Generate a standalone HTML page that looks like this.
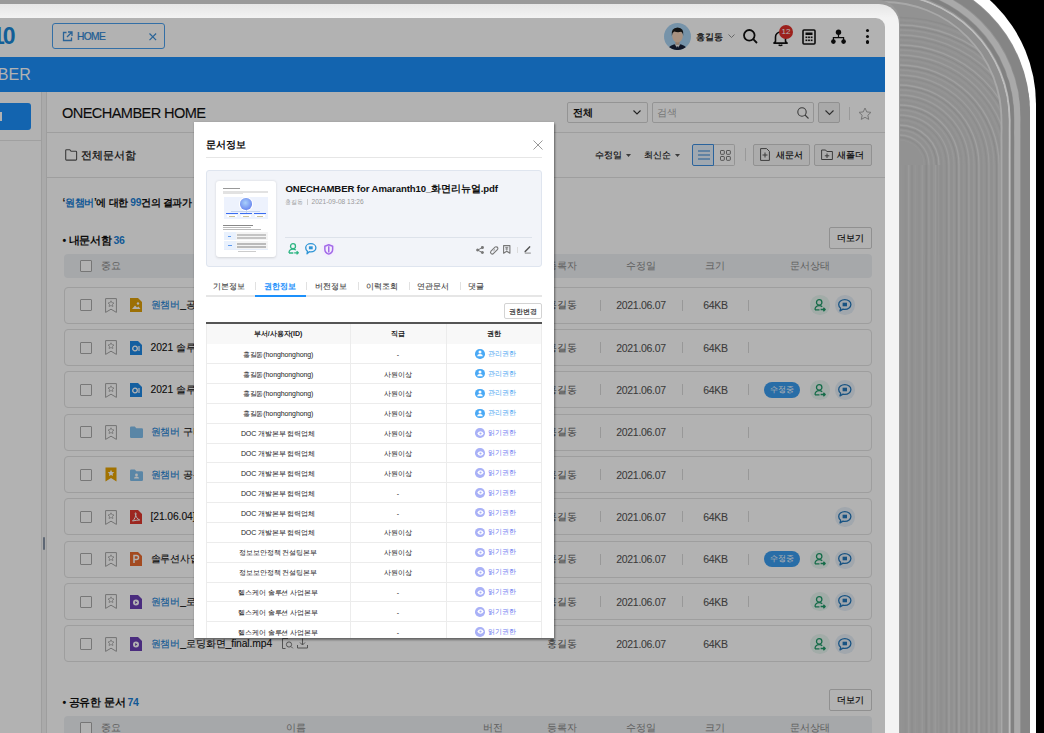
<!DOCTYPE html><html><head><meta charset="utf-8"><style>
*{box-sizing:border-box;margin:0;padding:0}
html,body{width:1044px;height:733px;overflow:hidden;background:#000;font-family:"Liberation Sans",sans-serif;color:#111}
.a{position:absolute}
.t{position:absolute;white-space:nowrap;line-height:1}
svg{position:absolute;overflow:visible}
</style></head><body>
<svg style="left:0;top:0" width="1044" height="733" viewBox="0 0 1044 733"><rect x="0" y="0" width="1044" height="733" fill="#000"/><path d="M860 -36 H896 A140 140 0 0 1 1036 104 V760 H860 Z" fill="#fff"/><path d="M860 -27.6 H890 A140 140 0 0 1 1030 112.4 V760 H860 Z" fill="#929292"/><clipPath id="gc"><path d="M860 -27.6 H890 A140 140 0 0 1 1030 112.4 V760 H860 Z"/></clipPath><g clip-path="url(#gc)"><path d="M880 140.0 H899 A25.0 25.0 0 0 1 924.0 165 V760" fill="none" stroke="#959595" stroke-width="1.3"/><path d="M880 137.5 H899 A27.5 27.5 0 0 1 926.5 165 V760" fill="none" stroke="#8c8c8c" stroke-width="1.3"/><path d="M880 135.0 H899 A30.0 30.0 0 0 1 929.0 165 V760" fill="none" stroke="#9d9d9d" stroke-width="1.3"/><path d="M880 132.5 H899 A32.5 32.5 0 0 1 931.5 165 V760" fill="none" stroke="#909090" stroke-width="1.3"/><path d="M880 130.0 H899 A35.0 35.0 0 0 1 934.0 165 V760" fill="none" stroke="#989898" stroke-width="1.3"/><path d="M880 127.5 H899 A37.5 37.5 0 0 1 936.5 165 V760" fill="none" stroke="#8a8a8a" stroke-width="1.3"/><path d="M880 125.0 H899 A40.0 40.0 0 0 1 939.0 165 V760" fill="none" stroke="#a0a0a0" stroke-width="1.3"/><path d="M880 122.5 H899 A42.5 42.5 0 0 1 941.5 165 V760" fill="none" stroke="#8f8f8f" stroke-width="1.3"/><path d="M880 120.0 H899 A45.0 45.0 0 0 1 944.0 165 V760" fill="none" stroke="#959595" stroke-width="1.3"/><path d="M880 117.5 H899 A47.5 47.5 0 0 1 946.5 165 V760" fill="none" stroke="#8c8c8c" stroke-width="1.3"/><path d="M880 115.0 H899 A50.0 50.0 0 0 1 949.0 165 V760" fill="none" stroke="#9d9d9d" stroke-width="1.3"/><path d="M880 112.5 H899 A52.5 52.5 0 0 1 951.5 165 V760" fill="none" stroke="#909090" stroke-width="1.3"/><path d="M880 110.0 H899 A55.0 55.0 0 0 1 954.0 165 V760" fill="none" stroke="#989898" stroke-width="1.3"/><path d="M880 107.5 H899 A57.5 57.5 0 0 1 956.5 165 V760" fill="none" stroke="#8a8a8a" stroke-width="1.3"/><path d="M880 105.0 H899 A60.0 60.0 0 0 1 959.0 165 V760" fill="none" stroke="#a0a0a0" stroke-width="1.3"/><path d="M880 102.5 H899 A62.5 62.5 0 0 1 961.5 165 V760" fill="none" stroke="#8f8f8f" stroke-width="1.3"/><path d="M880 100.0 H899 A65.0 65.0 0 0 1 964.0 165 V760" fill="none" stroke="#959595" stroke-width="1.3"/><path d="M880 97.5 H899 A67.5 67.5 0 0 1 966.5 165 V760" fill="none" stroke="#8c8c8c" stroke-width="1.3"/><path d="M880 95.0 H899 A70.0 70.0 0 0 1 969.0 165 V760" fill="none" stroke="#9d9d9d" stroke-width="1.3"/><path d="M880 92.5 H899 A72.5 72.5 0 0 1 971.5 165 V760" fill="none" stroke="#909090" stroke-width="1.3"/><path d="M880 90.0 H899 A75.0 75.0 0 0 1 974.0 165 V760" fill="none" stroke="#989898" stroke-width="1.3"/><path d="M880 87.5 H899 A77.5 77.5 0 0 1 976.5 165 V760" fill="none" stroke="#8a8a8a" stroke-width="1.3"/><path d="M880 85.0 H899 A80.0 80.0 0 0 1 979.0 165 V760" fill="none" stroke="#a0a0a0" stroke-width="1.3"/><path d="M880 82.5 H899 A82.5 82.5 0 0 1 981.5 165 V760" fill="none" stroke="#8f8f8f" stroke-width="1.3"/><path d="M880 80.0 H899 A85.0 85.0 0 0 1 984.0 165 V760" fill="none" stroke="#959595" stroke-width="1.3"/><path d="M880 77.5 H899 A87.5 87.5 0 0 1 986.5 165 V760" fill="none" stroke="#8c8c8c" stroke-width="1.3"/><path d="M880 75.0 H899 A90.0 90.0 0 0 1 989.0 165 V760" fill="none" stroke="#9d9d9d" stroke-width="1.3"/><path d="M880 72.5 H899 A92.5 92.5 0 0 1 991.5 165 V760" fill="none" stroke="#909090" stroke-width="1.3"/><path d="M880 70.0 H899 A95.0 95.0 0 0 1 994.0 165 V760" fill="none" stroke="#989898" stroke-width="1.3"/><path d="M880 67.5 H899 A97.5 97.5 0 0 1 996.5 165 V760" fill="none" stroke="#8a8a8a" stroke-width="1.3"/><path d="M880 65.0 H899 A100.0 100.0 0 0 1 999.0 165 V760" fill="none" stroke="#a0a0a0" stroke-width="1.3"/><path d="M880 62.5 H899 A102.5 102.5 0 0 1 1001.5 165 V760" fill="none" stroke="#8f8f8f" stroke-width="1.3"/><path d="M880 60.0 H899 A105.0 105.0 0 0 1 1004.0 165 V760" fill="none" stroke="#959595" stroke-width="1.3"/><path d="M880 57.5 H899 A107.5 107.5 0 0 1 1006.5 165 V760" fill="none" stroke="#8c8c8c" stroke-width="1.3"/><path d="M880 55.0 H899 A110.0 110.0 0 0 1 1009.0 165 V760" fill="none" stroke="#9d9d9d" stroke-width="1.3"/><path d="M880 52.5 H899 A112.5 112.5 0 0 1 1011.5 165 V760" fill="none" stroke="#909090" stroke-width="1.3"/><path d="M880 50.0 H899 A115.0 115.0 0 0 1 1014.0 165 V760" fill="none" stroke="#989898" stroke-width="1.3"/><path d="M880 47.5 H899 A117.5 117.5 0 0 1 1016.5 165 V760" fill="none" stroke="#8a8a8a" stroke-width="1.3"/><path d="M880 45.0 H899 A120.0 120.0 0 0 1 1019.0 165 V760" fill="none" stroke="#a0a0a0" stroke-width="1.3"/><path d="M880 42.5 H899 A122.5 122.5 0 0 1 1021.5 165 V760" fill="none" stroke="#8f8f8f" stroke-width="1.3"/><path d="M880 40.0 H899 A125.0 125.0 0 0 1 1024.0 165 V760" fill="none" stroke="#959595" stroke-width="1.3"/><path d="M880 37.5 H899 A127.5 127.5 0 0 1 1026.5 165 V760" fill="none" stroke="#8c8c8c" stroke-width="1.3"/><path d="M880 35.0 H899 A130.0 130.0 0 0 1 1029.0 165 V760" fill="none" stroke="#9d9d9d" stroke-width="1.3"/><path d="M880 32.5 H899 A132.5 132.5 0 0 1 1031.5 165 V760" fill="none" stroke="#909090" stroke-width="1.3"/><path d="M880 30.0 H899 A135.0 135.0 0 0 1 1034.0 165 V760" fill="none" stroke="#989898" stroke-width="1.3"/><path d="M880 27.5 H899 A137.5 137.5 0 0 1 1036.5 165 V760" fill="none" stroke="#8a8a8a" stroke-width="1.3"/><path d="M880 25.0 H899 A140.0 140.0 0 0 1 1039.0 165 V760" fill="none" stroke="#a0a0a0" stroke-width="1.3"/><path d="M880 22.5 H899 A142.5 142.5 0 0 1 1041.5 165 V760" fill="none" stroke="#8f8f8f" stroke-width="1.3"/><path d="M880 20.0 H899 A145.0 145.0 0 0 1 1044.0 165 V760" fill="none" stroke="#959595" stroke-width="1.3"/><path d="M880 17.5 H899 A147.5 147.5 0 0 1 1046.5 165 V760" fill="none" stroke="#8c8c8c" stroke-width="1.3"/><rect x="901.0" y="165" width="1.7" height="610" fill="#959595" opacity=".6"/><rect x="904.4" y="165" width="1.7" height="610" fill="#909090" opacity=".6"/><rect x="907.8" y="165" width="1.7" height="610" fill="#a0a0a0" opacity=".6"/><rect x="911.2" y="165" width="1.7" height="610" fill="#8c8c8c" opacity=".6"/><rect x="914.6" y="165" width="1.7" height="610" fill="#989898" opacity=".6"/><rect x="918.0" y="165" width="1.7" height="610" fill="#8f8f8f" opacity=".6"/><rect x="921.4" y="165" width="1.7" height="610" fill="#9d9d9d" opacity=".6"/><rect x="924.8" y="165" width="1.7" height="610" fill="#8a8a8a" opacity=".6"/><rect x="928.2" y="165" width="1.7" height="610" fill="#959595" opacity=".6"/><rect x="931.6" y="165" width="1.7" height="610" fill="#909090" opacity=".6"/><rect x="935.0" y="165" width="1.7" height="610" fill="#a0a0a0" opacity=".6"/><rect x="938.4" y="165" width="1.7" height="610" fill="#8c8c8c" opacity=".6"/><path d="M860 -22 H889.2 A136 136 0 0 1 1025.2 114 V760 H860 Z" fill="none" stroke="#858585" stroke-width="9.7"/><path d="M860 -15 H885.3 A132 132 0 0 1 1017.3 117 V760 H860 Z" fill="none" stroke="#a9a9a9" stroke-width="6"/><path d="M860 -10 H884.2 A128 128 0 0 1 1012.2 118 V760 H860 Z" fill="none" stroke="#818181" stroke-width="3.6"/><path d="M860 -6 H883.5 A126 126 0 0 1 1009.5 120 V760 H860 Z" fill="none" stroke="#bdbdbd" stroke-width="2"/><path d="M860 -2 H883.5 A122 122 0 0 1 1005.5 120 V760 H860 Z" fill="none" stroke="#8f8f8f" stroke-width="6"/><path d="M860 2 H883.5 A118 118 0 0 1 1001.5 120 V760 H860 Z" fill="none" stroke="#a8a8a8" stroke-width="1.8"/></g></svg>
<div class="a" style="left:-40px;top:0;width:940px;height:800px;background:#9a9a9a;border-top-right-radius:22px"></div>
<div class="a" style="left:-40px;top:3.8px;width:939px;height:800px;background:linear-gradient(#e6e6e6,#f3f3f3 14px);border-top-right-radius:20px"></div>
<div id="app" class="a" style="left:-20px;top:18px;width:904.8px;height:760px;background:#fff;border-top-right-radius:9px;overflow:hidden">
<div class="a" style="left:0;top:0;width:1000px;height:760px">
<div class="a" style="left:0.00px;top:0.00px;width:904.80px;height:38.50px;background:#fff"></div>
<div class="t" style="left:12.00px;top:18.30px;transform:translateY(-50%);font-size:23px;font-weight:bold;color:#1a88d8;letter-spacing:-2px">10</div>
<div class="a" style="left:71.80px;top:5.40px;width:113.00px;height:25.40px;border:1.8px solid #4aa0ee;border-radius:3px;background:#fff"></div>
<svg style="left:82.00px;top:13.00px" width="11" height="11" viewBox="0 0 11 11"><path d="M4.5 1.5H1.5v8h8V6.5M6 1h4v4M10 1L5 6" fill="none" stroke="#3d8fd8" stroke-width="1.3"/></svg>
<div class="t" style="left:97.00px;top:18.80px;transform:translateY(-50%);font-size:10.2px;color:#2f86d4;letter-spacing:-0.6px;-webkit-text-stroke-width:0.23px">HOME</div>
<svg style="left:168.80px;top:15.20px" width="7.6" height="7.6" viewBox="0 0 7.6 7.6"><path d="M.5 .5l6.6 6.6M7.1 .5L.5 7.1" stroke="#3d8fd8" stroke-width="1.2"/></svg>
<svg style="left:684.00px;top:4.50px" width="27" height="27" viewBox="0 0 27 27"><defs><clipPath id="av"><circle cx="13.5" cy="13.5" r="13.5"/></clipPath></defs><g clip-path="url(#av)"><rect width="27" height="27" fill="#a9d3f2"/><path d="M3 28Q4.5 21.5 13.5 21Q22.5 21.5 24 28Z" fill="#172038"/><path d="M10.8 21.2L13.5 26L16.2 21.2Z" fill="#f2f2f2"/><path d="M12.6 23.5h1.8l.4 3.5h-2.6z" fill="#1a2540"/><rect x="11.5" y="17" width="4" height="4.5" fill="#d9b49a"/><ellipse cx="13.5" cy="13" rx="5.3" ry="6.4" fill="#efd0b8"/><path d="M7.8 13Q6.6 5 13.6 4.6Q20.4 5 19.2 13Q18.8 9.2 17 8.8Q14 9.8 10.2 8.6Q8.2 9.6 7.8 13Z" fill="#1a1a1a"/></g></svg>
<div class="t" style="left:715.50px;top:18.50px;transform:translateY(-50%);font-size:9.4px;color:#111;-webkit-text-stroke-width:0.25px">홍길동</div>
<svg style="left:748.00px;top:16.00px" width="7" height="4" viewBox="0 0 7 4"><path d="M0.5 0.5L3.5 3.5L6.5 0.5" fill="none" stroke="#888" stroke-width="0.9"/></svg>
<svg style="left:763.00px;top:11.00px" width="15" height="15" viewBox="0 0 15 15"><circle cx="6.3" cy="6.3" r="5.3" fill="none" stroke="#111" stroke-width="1.8"/><path d="M10.2 10.2L14 14" stroke="#111" stroke-width="1.8"/></svg>
<svg style="left:792.50px;top:11.50px" width="15" height="16" viewBox="0 0 15 16"><path d="M2.5 11.5V7a5 5 0 0 1 10 0v4.5l1.6 1.6H0.9z" fill="none" stroke="#111" stroke-width="1.6" stroke-linejoin="round"/><path d="M7.5 0.5v1.5M5.8 14.6a1.8 1.5 0 0 0 3.4 0" fill="none" stroke="#111" stroke-width="1.5"/></svg>
<div class="a" style="left:799.00px;top:6.50px;width:14.00px;height:14.00px;border-radius:50%;background:#e0302a"></div>
<div class="t" style="left:806.00px;top:13.50px;transform:translate(-50%,-50%);font-size:8px;color:#fff">12</div>
<svg style="left:822.00px;top:11.00px" width="14" height="16" viewBox="0 0 14 16"><rect x="1" y="1" width="12" height="14" rx="1" fill="none" stroke="#111" stroke-width="1.6"/><rect x="3.5" y="3.5" width="7" height="2.5" fill="#111"/><g fill="#111"><rect x="3.5" y="7.5" width="1.8" height="1.6"/><rect x="6.1" y="7.5" width="1.8" height="1.6"/><rect x="8.7" y="7.5" width="1.8" height="1.6"/><rect x="3.5" y="10.5" width="1.8" height="1.6"/><rect x="6.1" y="10.5" width="1.8" height="1.6"/><rect x="8.7" y="10.5" width="1.8" height="1.6"/></g></svg>
<svg style="left:851.00px;top:11.00px" width="15" height="16" viewBox="0 0 15 16"><circle cx="7.5" cy="3.2" r="2.7" fill="#111"/><circle cx="2.4" cy="12.6" r="2.3" fill="#111"/><circle cx="12.6" cy="12.6" r="2.3" fill="#111"/><path d="M7.5 4v4.6M2.4 12V8.6h10.2V12" fill="none" stroke="#111" stroke-width="1.2"/></svg>
<div class="a" style="left:886.20px;top:11.00px;width:3.20px;height:3.20px;border-radius:50%;background:#111"></div>
<div class="a" style="left:886.20px;top:16.70px;width:3.20px;height:3.20px;border-radius:50%;background:#111"></div>
<div class="a" style="left:886.20px;top:22.40px;width:3.20px;height:3.20px;border-radius:50%;background:#111"></div>
<div class="a" style="left:0.00px;top:38.50px;width:904.80px;height:35.50px;background:#1c90fb"></div>
<div class="t" style="left:-64.00px;top:56.50px;transform:translateY(-50%);font-size:16px;color:#fff;letter-spacing:0px">ONECHAMBER</div>
<div class="a" style="left:0.00px;top:74.00px;width:61.00px;height:700.00px;background:#fff"></div>
<div class="a" style="left:0.00px;top:84.60px;width:51.40px;height:27.60px;background:#1c90fb;border-radius:3px"></div>
<div class="a" style="left:0.00px;top:122.00px;width:61.00px;height:1.00px;background:#e6e6e6"></div>
<div class="a" style="left:18.00px;top:93.50px;width:3.50px;height:9.50px;background:#fff"></div>
<div class="a" style="left:61.00px;top:74.00px;width:5.70px;height:700.00px;background:#f4f4f4;border-left:1px solid #e2e2e2"></div>
<div class="a" style="left:66.20px;top:74.00px;width:1.00px;height:700.00px;background:#e2e2e2"></div>
<div class="a" style="left:62.80px;top:519.00px;width:2.30px;height:12.70px;background:#8794a6;border-radius:1px"></div>
<div class="a" style="left:66.50px;top:74.00px;width:840.00px;height:700.00px;background:#fff"></div>
<div class="t" style="left:82.00px;top:94.60px;transform:translateY(-50%);font-size:14.6px;color:#111;letter-spacing:-0.6px;-webkit-text-stroke-width:0.10px">ONECHAMBER HOME</div>
<div class="a" style="left:66.50px;top:114.00px;width:840.00px;height:1.00px;background:#e3e3e3"></div>
<div class="a" style="left:587.00px;top:83.70px;width:81.30px;height:21.50px;border:1px solid #d5d5d5;border-radius:2px;background:#fff"></div>
<div class="t" style="left:592.50px;top:94.50px;transform:translateY(-50%);font-size:10px;font-weight:bold;color:#111">전체</div>
<svg style="left:653.00px;top:92.00px" width="8" height="5" viewBox="0 0 8 5"><path d="M0.5 0.5L4 4L7.5 0.5" fill="none" stroke="#333" stroke-width="1.1"/></svg>
<div class="a" style="left:672.00px;top:83.70px;width:162.40px;height:21.50px;border:1px solid #d5d5d5;border-radius:2px;background:#fff"></div>
<div class="t" style="left:677.00px;top:94.50px;transform:translateY(-50%);font-size:10px;color:#aaa">검색</div>
<svg style="left:817.00px;top:88.50px" width="12" height="12" viewBox="0 0 12 12"><circle cx="5" cy="5" r="4.2" fill="none" stroke="#555" stroke-width="1.1"/><path d="M8 8l3.5 3.5" stroke="#555" stroke-width="1.1"/></svg>
<div class="a" style="left:838.00px;top:83.70px;width:21.60px;height:21.50px;border:1px solid #cfcfcf;border-radius:2px;background:#f3f3f3"></div>
<svg style="left:844.50px;top:92.00px" width="9" height="5" viewBox="0 0 9 5"><path d="M0.5 0.5L4.5 4.5L8.5 0.5" fill="none" stroke="#444" stroke-width="1.1"/></svg>
<div class="a" style="left:868.50px;top:89.00px;width:1.00px;height:13.00px;background:#dcdcdc"></div>
<svg style="left:877.50px;top:88.50px" width="14" height="14" viewBox="0 0 14 14"><path d="M7 1l1.76 3.9 4.24.46-3.17 2.86.87 4.18L7 10.3 3.3 12.4l.87-4.18L1 5.36l4.24-.46z" fill="none" stroke="#aaa" stroke-width="1"/></svg>
<svg style="left:84.50px;top:131.30px" width="12.5" height="12" viewBox="0 0 12.5 12"><path d="M1.5 0.7h3.3l1.3 1.6h4.7a.8.8 0 0 1 .8.8v7.2a.8.8 0 0 1-.8.8H1.5a.8.8 0 0 1-.8-.8V1.5a.8.8 0 0 1 .8-.8z" fill="none" stroke="#555" stroke-width="1.1"/></svg>
<div class="t" style="left:101.40px;top:137.50px;transform:translateY(-50%);font-size:11.3px;color:#111;-webkit-text-stroke-width:0.20px">전체문서함</div>
<div class="t" style="left:615.00px;top:137.00px;transform:translateY(-50%);font-size:8.7px;color:#111;-webkit-text-stroke-width:0.15px">수정일</div>
<svg style="left:645.70px;top:135.50px" width="5" height="3" viewBox="0 0 5 3"><path d="M0 0h5L2.5 3z" fill="#555"/></svg>
<div class="t" style="left:663.80px;top:137.00px;transform:translateY(-50%);font-size:8.7px;color:#111;-webkit-text-stroke-width:0.15px">최신순</div>
<svg style="left:694.50px;top:135.50px" width="5" height="3" viewBox="0 0 5 3"><path d="M0 0h5L2.5 3z" fill="#555"/></svg>
<div class="a" style="left:712.30px;top:126.00px;width:22.00px;height:21.50px;border:1.4px solid #3d8fe0;border-radius:2px 0 0 2px;background:#e6f1fd"></div>
<svg style="left:717.50px;top:131.50px" width="12" height="10" viewBox="0 0 12 10"><path d="M0 1h12M0 5h12M0 9h12" stroke="#2f86d4" stroke-width="1.2"/></svg>
<div class="a" style="left:734.30px;top:126.00px;width:21.00px;height:21.50px;border:1px solid #d5d5d5;border-left:none;border-radius:0 2px 2px 0;background:#fff"></div>
<svg style="left:739.50px;top:131.50px" width="11" height="11" viewBox="0 0 11 11"><g fill="none" stroke="#777" stroke-width="1"><rect x="0.5" y="0.5" width="3.8" height="3.8" rx="0.6"/><rect x="6.5" y="0.5" width="3.8" height="3.8" rx="0.6"/><rect x="0.5" y="6.5" width="3.8" height="3.8" rx="0.6"/><rect x="6.5" y="6.5" width="3.8" height="3.8" rx="0.6"/></g></svg>
<div class="a" style="left:764.50px;top:130.00px;width:1.00px;height:13.00px;background:#dcdcdc"></div>
<div class="a" style="left:773.00px;top:126.00px;width:57.40px;height:21.50px;border:1px solid #d0d0d0;border-radius:2px;background:#f7f7f7"></div>
<svg style="left:780.00px;top:130.00px" width="10" height="13" viewBox="0 0 10 13"><path d="M0.6 0.6h6l2.8 2.8v9H0.6z" fill="none" stroke="#555" stroke-width="1"/><path d="M5 4.5v5M2.5 7h5" stroke="#555" stroke-width="1"/></svg>
<div class="t" style="left:795.80px;top:137.00px;transform:translateY(-50%);font-size:8.9px;color:#111;-webkit-text-stroke-width:0.20px">새문서</div>
<div class="a" style="left:833.80px;top:126.00px;width:57.90px;height:21.50px;border:1px solid #d0d0d0;border-radius:2px;background:#f7f7f7"></div>
<svg style="left:841.00px;top:130.50px" width="12" height="11" viewBox="0 0 12 11"><path d="M0.6 1h4l1.2 1.5h5.6v8H0.6z" fill="none" stroke="#555" stroke-width="1"/><path d="M6 4.5v4.5M3.8 6.8h4.5" stroke="#555" stroke-width="1"/></svg>
<div class="t" style="left:856.80px;top:137.00px;transform:translateY(-50%);font-size:8.9px;color:#111;-webkit-text-stroke-width:0.20px">새폴더</div>
<div class="a" style="left:66.50px;top:158.50px;width:840.00px;height:1.00px;background:#e3e3e3"></div>
<div class="t" style="left:82.50px;top:184.50px;transform:translateY(-50%);font-size:10.2px;font-weight:bold;color:#111;letter-spacing:-0.35px">‘<span style="color:#1a7fd6">원챔버</span>’에 대한 <span style="color:#1a7fd6">99</span>건의 결과가 검색되었습니다.</div>
<div class="t" style="left:82.50px;top:222.00px;transform:translateY(-50%);font-size:10.5px;font-weight:bold;color:#111;letter-spacing:-0.2px">• 내문서함<span style="color:#1a7fd6;margin-left:1.5px">36</span></div>
<div class="a" style="left:848.50px;top:209.00px;width:43.50px;height:22.00px;border:1px solid #cfcfcf;border-radius:2px;background:#fff"></div>
<div class="t" style="left:870.20px;top:220.00px;transform:translate(-50%,-50%);font-size:8.9px;color:#111;-webkit-text-stroke-width:0.20px">더보기</div>
<div class="a" style="left:83.50px;top:236.20px;width:808.50px;height:23.80px;background:#eef1f4;border-radius:4px"></div>
<div class="a" style="left:100.00px;top:242.20px;width:12.00px;height:12.00px;border:1px solid #aaa;border-radius:1px;background:#fff"></div>
<div class="t" style="left:121.00px;top:248.20px;transform:translateY(-50%);font-size:9.5px;color:#888">중요</div>
<div class="t" style="left:316.00px;top:248.20px;transform:translate(-50%,-50%);font-size:9.5px;color:#888">이름</div>
<div class="t" style="left:513.00px;top:248.20px;transform:translate(-50%,-50%);font-size:9.5px;color:#888">버전</div>
<div class="t" style="left:582.00px;top:248.20px;transform:translate(-50%,-50%);font-size:9.5px;color:#888">등록자</div>
<div class="t" style="left:661.00px;top:248.20px;transform:translate(-50%,-50%);font-size:9.5px;color:#888">수정일</div>
<div class="t" style="left:735.00px;top:248.20px;transform:translate(-50%,-50%);font-size:9.5px;color:#888">크기</div>
<div class="t" style="left:830.00px;top:248.20px;transform:translate(-50%,-50%);font-size:9.5px;color:#888">문서상태</div>
<div class="a" style="left:83.50px;top:268.60px;width:808.50px;height:37.10px;border:1px solid #e2e2e2;border-radius:4px;background:#fff"></div>
<div class="a" style="left:100.00px;top:281.15px;width:12.00px;height:12.00px;border:1px solid #ababab;border-radius:1px;background:#fff"></div>
<svg style="left:125.00px;top:279.85px" width="12" height="15" viewBox="0 0 12 15"><path d="M0.6 0.6h10.8v13.8L6 11.2 0.6 14.4z" fill="none" stroke="#a5a5a5" stroke-width="1"/><path d="M6 2.8l.9 1.9 2.1.3-1.5 1.4.4 2.1L6 7.5l-1.9 1 .4-2.1L3 5l2.1-.3z" fill="none" stroke="#a5a5a5" stroke-width=".8"/></svg>
<svg style="left:150.00px;top:280.15px" width="12" height="14" viewBox="0 0 12 14"><path d="M0 0h8l4 4v10H0z" fill="#e0a10a"/><circle cx="8" cy="5.5" r="1.2" fill="#fff"/><path d="M2 11l3-3.5 2 2 1.5-1L10.5 11z" fill="#fff"/></svg>
<div class="t" style="left:170.60px;top:287.15px;transform:translateY(-50%);font-size:10.3px;color:#111;letter-spacing:-0.1px;-webkit-text-stroke-width:0.10px"><span style="color:#1a7fd6">원챔버</span>_공유 폴더 화면 이미지.png</div>
<div class="t" style="left:582.00px;top:287.15px;transform:translate(-50%,-50%);font-size:9.5px;color:#555">홍길동</div>
<div class="t" style="left:661.00px;top:287.15px;transform:translate(-50%,-50%);font-size:10.5px;color:#555;letter-spacing:-0.3px;-webkit-text-stroke-width:0.07px">2021.06.07</div>
<div class="t" style="left:735.50px;top:287.15px;transform:translate(-50%,-50%);font-size:10.5px;color:#555;letter-spacing:-0.3px;-webkit-text-stroke-width:0.07px">64KB</div>
<div class="a" style="left:619.50px;top:281.65px;width:1.00px;height:11.00px;background:#dadada"></div>
<div class="a" style="left:702.00px;top:281.65px;width:1.00px;height:11.00px;background:#dadada"></div>
<div class="a" style="left:768.00px;top:281.65px;width:1.00px;height:11.00px;background:#dadada"></div>
<div class="a" style="left:830.30px;top:277.45px;width:19.40px;height:19.40px;border-radius:50%;background:#e9f6f1"></div>
<svg style="left:834.00px;top:281.15px" width="12.5" height="12" viewBox="0 0 12.5 12"><circle cx="5.2" cy="3.4" r="2.7" fill="none" stroke="#1e9a68" stroke-width="1.3"/><path d="M1 10.8c0-2.6 1.8-4.2 4.2-4.2 1.3 0 2.3.4 3 1.1M1 10.8h4.5M6.6 10.5h4.5M9.4 8.7l1.8 1.8-1.8 1.8" fill="none" stroke="#1e9a68" stroke-width="1.3" stroke-linejoin="round"/></svg>
<div class="a" style="left:855.30px;top:277.45px;width:19.40px;height:19.40px;border-radius:50%;background:#e7f0f8"></div>
<svg style="left:858.20px;top:280.95px" width="13.6" height="12.6" viewBox="0 0 13.6 12.6"><path d="M6.8.7c3.4 0 6.1 2.1 6.1 4.8s-2.7 4.8-6.1 4.8c-.6 0-1.2-.1-1.8-.2L2 11.9l.7-2.7C1.4 8.3.7 7 .7 5.5.7 2.8 3.4.7 6.8.7z" fill="none" stroke="#2377bb" stroke-width="1.3" stroke-linejoin="round"/><rect x="4.6" y="3.7" width="4.4" height="3.6" fill="#2377bb"/></svg>
<div class="a" style="left:83.50px;top:310.95px;width:808.50px;height:37.10px;border:1px solid #e2e2e2;border-radius:4px;background:#fff"></div>
<div class="a" style="left:100.00px;top:323.50px;width:12.00px;height:12.00px;border:1px solid #ababab;border-radius:1px;background:#fff"></div>
<svg style="left:125.00px;top:322.20px" width="12" height="15" viewBox="0 0 12 15"><path d="M0.6 0.6h10.8v13.8L6 11.2 0.6 14.4z" fill="none" stroke="#a5a5a5" stroke-width="1"/><path d="M6 2.8l.9 1.9 2.1.3-1.5 1.4.4 2.1L6 7.5l-1.9 1 .4-2.1L3 5l2.1-.3z" fill="none" stroke="#a5a5a5" stroke-width=".8"/></svg>
<svg style="left:150.00px;top:322.50px" width="12" height="14" viewBox="0 0 12 14"><path d="M0 0h8l4 4v10H0z" fill="#1e88e5"/><circle cx="5" cy="7.5" r="2.3" fill="none" stroke="#fff" stroke-width="1.3"/><path d="M9 5v5" stroke="#fff" stroke-width="1.2"/></svg>
<div class="t" style="left:170.60px;top:329.50px;transform:translateY(-50%);font-size:10.3px;color:#111;letter-spacing:-0.1px;-webkit-text-stroke-width:0.10px">2021 솔루션사업 기획안.docx</div>
<div class="t" style="left:582.00px;top:329.50px;transform:translate(-50%,-50%);font-size:9.5px;color:#555">홍길동</div>
<div class="t" style="left:661.00px;top:329.50px;transform:translate(-50%,-50%);font-size:10.5px;color:#555;letter-spacing:-0.3px;-webkit-text-stroke-width:0.07px">2021.06.07</div>
<div class="t" style="left:735.50px;top:329.50px;transform:translate(-50%,-50%);font-size:10.5px;color:#555;letter-spacing:-0.3px;-webkit-text-stroke-width:0.07px">64KB</div>
<div class="a" style="left:619.50px;top:324.00px;width:1.00px;height:11.00px;background:#dadada"></div>
<div class="a" style="left:702.00px;top:324.00px;width:1.00px;height:11.00px;background:#dadada"></div>
<div class="a" style="left:768.00px;top:324.00px;width:1.00px;height:11.00px;background:#dadada"></div>
<div class="a" style="left:83.50px;top:353.30px;width:808.50px;height:37.10px;border:1px solid #e2e2e2;border-radius:4px;background:#fff"></div>
<div class="a" style="left:100.00px;top:365.85px;width:12.00px;height:12.00px;border:1px solid #ababab;border-radius:1px;background:#fff"></div>
<svg style="left:125.00px;top:364.55px" width="12" height="15" viewBox="0 0 12 15"><path d="M0.6 0.6h10.8v13.8L6 11.2 0.6 14.4z" fill="none" stroke="#a5a5a5" stroke-width="1"/><path d="M6 2.8l.9 1.9 2.1.3-1.5 1.4.4 2.1L6 7.5l-1.9 1 .4-2.1L3 5l2.1-.3z" fill="none" stroke="#a5a5a5" stroke-width=".8"/></svg>
<svg style="left:150.00px;top:364.85px" width="12" height="14" viewBox="0 0 12 14"><path d="M0 0h8l4 4v10H0z" fill="#1e88e5"/><circle cx="5" cy="7.5" r="2.3" fill="none" stroke="#fff" stroke-width="1.3"/><path d="M9 5v5" stroke="#fff" stroke-width="1.2"/></svg>
<div class="t" style="left:170.60px;top:371.85px;transform:translateY(-50%);font-size:10.3px;color:#111;letter-spacing:-0.1px;-webkit-text-stroke-width:0.10px">2021 솔루션사업 기획안_v2.docx</div>
<div class="t" style="left:582.00px;top:371.85px;transform:translate(-50%,-50%);font-size:9.5px;color:#555">홍길동</div>
<div class="t" style="left:661.00px;top:371.85px;transform:translate(-50%,-50%);font-size:10.5px;color:#555;letter-spacing:-0.3px;-webkit-text-stroke-width:0.07px">2021.06.07</div>
<div class="t" style="left:735.50px;top:371.85px;transform:translate(-50%,-50%);font-size:10.5px;color:#555;letter-spacing:-0.3px;-webkit-text-stroke-width:0.07px">64KB</div>
<div class="a" style="left:619.50px;top:366.35px;width:1.00px;height:11.00px;background:#dadada"></div>
<div class="a" style="left:702.00px;top:366.35px;width:1.00px;height:11.00px;background:#dadada"></div>
<div class="a" style="left:768.00px;top:366.35px;width:1.00px;height:11.00px;background:#dadada"></div>
<div class="a" style="left:784.00px;top:364.05px;width:35.50px;height:15.60px;border-radius:8px;background:#3a9cf0"></div>
<div class="t" style="left:801.70px;top:371.85px;transform:translate(-50%,-50%);font-size:8px;color:#fff">수정중</div>
<div class="a" style="left:830.30px;top:362.15px;width:19.40px;height:19.40px;border-radius:50%;background:#e9f6f1"></div>
<svg style="left:834.00px;top:365.85px" width="12.5" height="12" viewBox="0 0 12.5 12"><circle cx="5.2" cy="3.4" r="2.7" fill="none" stroke="#1e9a68" stroke-width="1.3"/><path d="M1 10.8c0-2.6 1.8-4.2 4.2-4.2 1.3 0 2.3.4 3 1.1M1 10.8h4.5M6.6 10.5h4.5M9.4 8.7l1.8 1.8-1.8 1.8" fill="none" stroke="#1e9a68" stroke-width="1.3" stroke-linejoin="round"/></svg>
<div class="a" style="left:855.30px;top:362.15px;width:19.40px;height:19.40px;border-radius:50%;background:#e7f0f8"></div>
<svg style="left:858.20px;top:365.65px" width="13.6" height="12.6" viewBox="0 0 13.6 12.6"><path d="M6.8.7c3.4 0 6.1 2.1 6.1 4.8s-2.7 4.8-6.1 4.8c-.6 0-1.2-.1-1.8-.2L2 11.9l.7-2.7C1.4 8.3.7 7 .7 5.5.7 2.8 3.4.7 6.8.7z" fill="none" stroke="#2377bb" stroke-width="1.3" stroke-linejoin="round"/><rect x="4.6" y="3.7" width="4.4" height="3.6" fill="#2377bb"/></svg>
<div class="a" style="left:83.50px;top:395.65px;width:808.50px;height:37.10px;border:1px solid #e2e2e2;border-radius:4px;background:#fff"></div>
<div class="a" style="left:100.00px;top:408.20px;width:12.00px;height:12.00px;border:1px solid #ababab;border-radius:1px;background:#fff"></div>
<svg style="left:125.00px;top:406.90px" width="12" height="15" viewBox="0 0 12 15"><path d="M0.6 0.6h10.8v13.8L6 11.2 0.6 14.4z" fill="none" stroke="#a5a5a5" stroke-width="1"/><path d="M6 2.8l.9 1.9 2.1.3-1.5 1.4.4 2.1L6 7.5l-1.9 1 .4-2.1L3 5l2.1-.3z" fill="none" stroke="#a5a5a5" stroke-width=".8"/></svg>
<svg style="left:149.50px;top:408.20px" width="13" height="12" viewBox="0 0 13 12"><path d="M1.2 0.5h3.6l1.5 1.8h5.5a1.2 1.2 0 0 1 1.2 1.2v7.3a1.2 1.2 0 0 1-1.2 1.2H1.2A1.2 1.2 0 0 1 0 10.8V1.7A1.2 1.2 0 0 1 1.2.5z" fill="#82c0ee"/></svg>
<div class="t" style="left:170.60px;top:414.20px;transform:translateY(-50%);font-size:10.3px;color:#111;letter-spacing:-0.1px;-webkit-text-stroke-width:0.10px"><span style="color:#1a7fd6">원챔버</span> 구버전 문서</div>
<div class="t" style="left:582.00px;top:414.20px;transform:translate(-50%,-50%);font-size:9.5px;color:#555">홍길동</div>
<div class="t" style="left:661.00px;top:414.20px;transform:translate(-50%,-50%);font-size:10.5px;color:#555;letter-spacing:-0.3px;-webkit-text-stroke-width:0.07px">2021.06.07</div>
<div class="a" style="left:619.50px;top:408.70px;width:1.00px;height:11.00px;background:#dadada"></div>
<div class="a" style="left:702.00px;top:408.70px;width:1.00px;height:11.00px;background:#dadada"></div>
<div class="a" style="left:768.00px;top:408.70px;width:1.00px;height:11.00px;background:#dadada"></div>
<div class="a" style="left:83.50px;top:438.00px;width:808.50px;height:37.10px;border:1px solid #e2e2e2;border-radius:4px;background:#fff"></div>
<div class="a" style="left:100.00px;top:450.55px;width:12.00px;height:12.00px;border:1px solid #ababab;border-radius:1px;background:#fff"></div>
<svg style="left:125.00px;top:449.25px" width="12" height="15" viewBox="0 0 12 15"><path d="M0.5 0.5h11v14l-5.5-3.5L0.5 14.5z" fill="#e8a400"/><path d="M6 2.8l1 2.1 2.3.3-1.7 1.6.4 2.3L6 8l-2 1.1.4-2.3-1.7-1.6 2.3-.3z" fill="#fff"/></svg>
<svg style="left:149.50px;top:450.55px" width="13" height="12" viewBox="0 0 13 12"><path d="M1.2 0.5h3.6l1.5 1.8h5.5a1.2 1.2 0 0 1 1.2 1.2v7.3a1.2 1.2 0 0 1-1.2 1.2H1.2A1.2 1.2 0 0 1 0 10.8V1.7A1.2 1.2 0 0 1 1.2.5z" fill="#82c0ee"/><circle cx="6.5" cy="6" r="1.4" fill="#fff"/><path d="M4 9.5a2.5 2 0 0 1 5 0z" fill="#fff"/></svg>
<div class="t" style="left:170.60px;top:456.55px;transform:translateY(-50%);font-size:10.3px;color:#111;letter-spacing:-0.1px;-webkit-text-stroke-width:0.10px"><span style="color:#1a7fd6">원챔버</span> 공유 폴더</div>
<div class="t" style="left:582.00px;top:456.55px;transform:translate(-50%,-50%);font-size:9.5px;color:#555">홍길동</div>
<div class="t" style="left:661.00px;top:456.55px;transform:translate(-50%,-50%);font-size:10.5px;color:#555;letter-spacing:-0.3px;-webkit-text-stroke-width:0.07px">2021.06.07</div>
<div class="a" style="left:619.50px;top:451.05px;width:1.00px;height:11.00px;background:#dadada"></div>
<div class="a" style="left:702.00px;top:451.05px;width:1.00px;height:11.00px;background:#dadada"></div>
<div class="a" style="left:768.00px;top:451.05px;width:1.00px;height:11.00px;background:#dadada"></div>
<div class="a" style="left:83.50px;top:480.35px;width:808.50px;height:37.10px;border:1px solid #e2e2e2;border-radius:4px;background:#fff"></div>
<div class="a" style="left:100.00px;top:492.90px;width:12.00px;height:12.00px;border:1px solid #ababab;border-radius:1px;background:#fff"></div>
<svg style="left:125.00px;top:491.60px" width="12" height="15" viewBox="0 0 12 15"><path d="M0.6 0.6h10.8v13.8L6 11.2 0.6 14.4z" fill="none" stroke="#a5a5a5" stroke-width="1"/><path d="M6 2.8l.9 1.9 2.1.3-1.5 1.4.4 2.1L6 7.5l-1.9 1 .4-2.1L3 5l2.1-.3z" fill="none" stroke="#a5a5a5" stroke-width=".8"/></svg>
<svg style="left:150.00px;top:491.90px" width="12" height="14" viewBox="0 0 12 14"><path d="M0 0h8l4 4v10H0z" fill="#e0382f"/><path d="M2.5 11c2-1.5 3.5-5 3.5-7.5 0-1-.8-1-.8 0 0 2.5 2.5 6 4.5 6.5-2 0-5 .5-7.2 1z" fill="none" stroke="#fff" stroke-width="1"/></svg>
<div class="t" style="left:170.60px;top:498.90px;transform:translateY(-50%);font-size:10.3px;color:#111;letter-spacing:-0.1px;-webkit-text-stroke-width:0.10px">[21.06.04] 회의록.pdf</div>
<div class="t" style="left:582.00px;top:498.90px;transform:translate(-50%,-50%);font-size:9.5px;color:#555">홍길동</div>
<div class="t" style="left:661.00px;top:498.90px;transform:translate(-50%,-50%);font-size:10.5px;color:#555;letter-spacing:-0.3px;-webkit-text-stroke-width:0.07px">2021.06.07</div>
<div class="t" style="left:735.50px;top:498.90px;transform:translate(-50%,-50%);font-size:10.5px;color:#555;letter-spacing:-0.3px;-webkit-text-stroke-width:0.07px">64KB</div>
<div class="a" style="left:619.50px;top:493.40px;width:1.00px;height:11.00px;background:#dadada"></div>
<div class="a" style="left:702.00px;top:493.40px;width:1.00px;height:11.00px;background:#dadada"></div>
<div class="a" style="left:768.00px;top:493.40px;width:1.00px;height:11.00px;background:#dadada"></div>
<div class="a" style="left:855.30px;top:489.20px;width:19.40px;height:19.40px;border-radius:50%;background:#e7f0f8"></div>
<svg style="left:858.20px;top:492.70px" width="13.6" height="12.6" viewBox="0 0 13.6 12.6"><path d="M6.8.7c3.4 0 6.1 2.1 6.1 4.8s-2.7 4.8-6.1 4.8c-.6 0-1.2-.1-1.8-.2L2 11.9l.7-2.7C1.4 8.3.7 7 .7 5.5.7 2.8 3.4.7 6.8.7z" fill="none" stroke="#2377bb" stroke-width="1.3" stroke-linejoin="round"/><rect x="4.6" y="3.7" width="4.4" height="3.6" fill="#2377bb"/></svg>
<div class="a" style="left:83.50px;top:522.70px;width:808.50px;height:37.10px;border:1px solid #e2e2e2;border-radius:4px;background:#fff"></div>
<div class="a" style="left:100.00px;top:535.25px;width:12.00px;height:12.00px;border:1px solid #ababab;border-radius:1px;background:#fff"></div>
<svg style="left:125.00px;top:533.95px" width="12" height="15" viewBox="0 0 12 15"><path d="M0.6 0.6h10.8v13.8L6 11.2 0.6 14.4z" fill="none" stroke="#a5a5a5" stroke-width="1"/><path d="M6 2.8l.9 1.9 2.1.3-1.5 1.4.4 2.1L6 7.5l-1.9 1 .4-2.1L3 5l2.1-.3z" fill="none" stroke="#a5a5a5" stroke-width=".8"/></svg>
<svg style="left:150.00px;top:534.25px" width="12" height="14" viewBox="0 0 12 14"><path d="M0 0h8l4 4v10H0z" fill="#ea6a2e"/><path d="M4 11V3.5h2.5a2 2 0 0 1 0 4H4" fill="none" stroke="#fff" stroke-width="1.5"/></svg>
<div class="t" style="left:170.60px;top:541.25px;transform:translateY(-50%);font-size:10.3px;color:#111;letter-spacing:-0.1px;-webkit-text-stroke-width:0.10px">솔루션사업부 발표자료.pptx</div>
<div class="t" style="left:582.00px;top:541.25px;transform:translate(-50%,-50%);font-size:9.5px;color:#555">홍길동</div>
<div class="t" style="left:661.00px;top:541.25px;transform:translate(-50%,-50%);font-size:10.5px;color:#555;letter-spacing:-0.3px;-webkit-text-stroke-width:0.07px">2021.06.07</div>
<div class="t" style="left:735.50px;top:541.25px;transform:translate(-50%,-50%);font-size:10.5px;color:#555;letter-spacing:-0.3px;-webkit-text-stroke-width:0.07px">64KB</div>
<div class="a" style="left:619.50px;top:535.75px;width:1.00px;height:11.00px;background:#dadada"></div>
<div class="a" style="left:702.00px;top:535.75px;width:1.00px;height:11.00px;background:#dadada"></div>
<div class="a" style="left:768.00px;top:535.75px;width:1.00px;height:11.00px;background:#dadada"></div>
<div class="a" style="left:784.00px;top:533.45px;width:35.50px;height:15.60px;border-radius:8px;background:#3a9cf0"></div>
<div class="t" style="left:801.70px;top:541.25px;transform:translate(-50%,-50%);font-size:8px;color:#fff">수정중</div>
<div class="a" style="left:830.30px;top:531.55px;width:19.40px;height:19.40px;border-radius:50%;background:#e9f6f1"></div>
<svg style="left:834.00px;top:535.25px" width="12.5" height="12" viewBox="0 0 12.5 12"><circle cx="5.2" cy="3.4" r="2.7" fill="none" stroke="#1e9a68" stroke-width="1.3"/><path d="M1 10.8c0-2.6 1.8-4.2 4.2-4.2 1.3 0 2.3.4 3 1.1M1 10.8h4.5M6.6 10.5h4.5M9.4 8.7l1.8 1.8-1.8 1.8" fill="none" stroke="#1e9a68" stroke-width="1.3" stroke-linejoin="round"/></svg>
<div class="a" style="left:855.30px;top:531.55px;width:19.40px;height:19.40px;border-radius:50%;background:#e7f0f8"></div>
<svg style="left:858.20px;top:535.05px" width="13.6" height="12.6" viewBox="0 0 13.6 12.6"><path d="M6.8.7c3.4 0 6.1 2.1 6.1 4.8s-2.7 4.8-6.1 4.8c-.6 0-1.2-.1-1.8-.2L2 11.9l.7-2.7C1.4 8.3.7 7 .7 5.5.7 2.8 3.4.7 6.8.7z" fill="none" stroke="#2377bb" stroke-width="1.3" stroke-linejoin="round"/><rect x="4.6" y="3.7" width="4.4" height="3.6" fill="#2377bb"/></svg>
<div class="a" style="left:83.50px;top:565.05px;width:808.50px;height:37.10px;border:1px solid #e2e2e2;border-radius:4px;background:#fff"></div>
<div class="a" style="left:100.00px;top:577.60px;width:12.00px;height:12.00px;border:1px solid #ababab;border-radius:1px;background:#fff"></div>
<svg style="left:125.00px;top:576.30px" width="12" height="15" viewBox="0 0 12 15"><path d="M0.6 0.6h10.8v13.8L6 11.2 0.6 14.4z" fill="none" stroke="#a5a5a5" stroke-width="1"/><path d="M6 2.8l.9 1.9 2.1.3-1.5 1.4.4 2.1L6 7.5l-1.9 1 .4-2.1L3 5l2.1-.3z" fill="none" stroke="#a5a5a5" stroke-width=".8"/></svg>
<svg style="left:150.00px;top:576.60px" width="12" height="14" viewBox="0 0 12 14"><path d="M0 0h8l4 4v10H0z" fill="#6a3fb5"/><circle cx="6" cy="7.5" r="3" fill="#fff"/><path d="M5.2 6.1v2.8l2.2-1.4z" fill="#6a3fb5"/></svg>
<div class="t" style="left:170.60px;top:583.60px;transform:translateY(-50%);font-size:10.3px;color:#111;letter-spacing:-0.1px;-webkit-text-stroke-width:0.10px"><span style="color:#1a7fd6">원챔버</span>_로딩화면.mp4</div>
<div class="t" style="left:582.00px;top:583.60px;transform:translate(-50%,-50%);font-size:9.5px;color:#555">홍길동</div>
<div class="t" style="left:661.00px;top:583.60px;transform:translate(-50%,-50%);font-size:10.5px;color:#555;letter-spacing:-0.3px;-webkit-text-stroke-width:0.07px">2021.06.07</div>
<div class="t" style="left:735.50px;top:583.60px;transform:translate(-50%,-50%);font-size:10.5px;color:#555;letter-spacing:-0.3px;-webkit-text-stroke-width:0.07px">64KB</div>
<div class="a" style="left:619.50px;top:578.10px;width:1.00px;height:11.00px;background:#dadada"></div>
<div class="a" style="left:702.00px;top:578.10px;width:1.00px;height:11.00px;background:#dadada"></div>
<div class="a" style="left:768.00px;top:578.10px;width:1.00px;height:11.00px;background:#dadada"></div>
<div class="a" style="left:830.30px;top:573.90px;width:19.40px;height:19.40px;border-radius:50%;background:#e9f6f1"></div>
<svg style="left:834.00px;top:577.60px" width="12.5" height="12" viewBox="0 0 12.5 12"><circle cx="5.2" cy="3.4" r="2.7" fill="none" stroke="#1e9a68" stroke-width="1.3"/><path d="M1 10.8c0-2.6 1.8-4.2 4.2-4.2 1.3 0 2.3.4 3 1.1M1 10.8h4.5M6.6 10.5h4.5M9.4 8.7l1.8 1.8-1.8 1.8" fill="none" stroke="#1e9a68" stroke-width="1.3" stroke-linejoin="round"/></svg>
<div class="a" style="left:855.30px;top:573.90px;width:19.40px;height:19.40px;border-radius:50%;background:#e7f0f8"></div>
<svg style="left:858.20px;top:577.40px" width="13.6" height="12.6" viewBox="0 0 13.6 12.6"><path d="M6.8.7c3.4 0 6.1 2.1 6.1 4.8s-2.7 4.8-6.1 4.8c-.6 0-1.2-.1-1.8-.2L2 11.9l.7-2.7C1.4 8.3.7 7 .7 5.5.7 2.8 3.4.7 6.8.7z" fill="none" stroke="#2377bb" stroke-width="1.3" stroke-linejoin="round"/><rect x="4.6" y="3.7" width="4.4" height="3.6" fill="#2377bb"/></svg>
<div class="a" style="left:83.50px;top:607.40px;width:808.50px;height:37.10px;border:1px solid #e2e2e2;border-radius:4px;background:#fff"></div>
<div class="a" style="left:100.00px;top:619.95px;width:12.00px;height:12.00px;border:1px solid #ababab;border-radius:1px;background:#fff"></div>
<svg style="left:125.00px;top:618.65px" width="12" height="15" viewBox="0 0 12 15"><path d="M0.6 0.6h10.8v13.8L6 11.2 0.6 14.4z" fill="none" stroke="#a5a5a5" stroke-width="1"/><path d="M6 2.8l.9 1.9 2.1.3-1.5 1.4.4 2.1L6 7.5l-1.9 1 .4-2.1L3 5l2.1-.3z" fill="none" stroke="#a5a5a5" stroke-width=".8"/></svg>
<svg style="left:150.00px;top:618.95px" width="12" height="14" viewBox="0 0 12 14"><path d="M0 0h8l4 4v10H0z" fill="#6a3fb5"/><circle cx="6" cy="7.5" r="3" fill="#fff"/><path d="M5.2 6.1v2.8l2.2-1.4z" fill="#6a3fb5"/></svg>
<div class="t" style="left:170.60px;top:625.95px;transform:translateY(-50%);font-size:10.3px;color:#111;letter-spacing:-0.1px;-webkit-text-stroke-width:0.10px"><span style="color:#1a7fd6">원챔버</span>_로딩화면_final.mp4</div>
<div class="t" style="left:582.00px;top:625.95px;transform:translate(-50%,-50%);font-size:9.5px;color:#555">홍길동</div>
<div class="t" style="left:661.00px;top:625.95px;transform:translate(-50%,-50%);font-size:10.5px;color:#555;letter-spacing:-0.3px;-webkit-text-stroke-width:0.07px">2021.06.07</div>
<div class="t" style="left:735.50px;top:625.95px;transform:translate(-50%,-50%);font-size:10.5px;color:#555;letter-spacing:-0.3px;-webkit-text-stroke-width:0.07px">64KB</div>
<div class="a" style="left:830.30px;top:616.25px;width:19.40px;height:19.40px;border-radius:50%;background:#e9f6f1"></div>
<svg style="left:834.00px;top:619.95px" width="12.5" height="12" viewBox="0 0 12.5 12"><circle cx="5.2" cy="3.4" r="2.7" fill="none" stroke="#1e9a68" stroke-width="1.3"/><path d="M1 10.8c0-2.6 1.8-4.2 4.2-4.2 1.3 0 2.3.4 3 1.1M1 10.8h4.5M6.6 10.5h4.5M9.4 8.7l1.8 1.8-1.8 1.8" fill="none" stroke="#1e9a68" stroke-width="1.3" stroke-linejoin="round"/></svg>
<div class="a" style="left:855.30px;top:616.25px;width:19.40px;height:19.40px;border-radius:50%;background:#e7f0f8"></div>
<svg style="left:858.20px;top:619.75px" width="13.6" height="12.6" viewBox="0 0 13.6 12.6"><path d="M6.8.7c3.4 0 6.1 2.1 6.1 4.8s-2.7 4.8-6.1 4.8c-.6 0-1.2-.1-1.8-.2L2 11.9l.7-2.7C1.4 8.3.7 7 .7 5.5.7 2.8 3.4.7 6.8.7z" fill="none" stroke="#2377bb" stroke-width="1.3" stroke-linejoin="round"/><rect x="4.6" y="3.7" width="4.4" height="3.6" fill="#2377bb"/></svg>
<svg style="left:302.00px;top:620.45px" width="11" height="11" viewBox="0 0 11 11"><path d="M6 .5H.5v10h3" fill="none" stroke="#777" stroke-width="1"/><circle cx="7" cy="6.5" r="2.6" fill="none" stroke="#777" stroke-width="1"/><path d="M9 8.5l1.8 1.8" stroke="#777" stroke-width="1"/></svg>
<svg style="left:316.50px;top:620.45px" width="11" height="11" viewBox="0 0 11 11"><path d="M5.5 .5v6.5M3 4.5l2.5 2.5L8 4.5M.5 7v3h10V7" fill="none" stroke="#777" stroke-width="1"/></svg>
<div class="t" style="left:82.50px;top:684.00px;transform:translateY(-50%);font-size:10.5px;font-weight:bold;color:#111;letter-spacing:-0.2px">• 공유한 문서<span style="color:#1a7fd6;margin-left:2px">74</span></div>
<div class="a" style="left:848.50px;top:670.50px;width:43.50px;height:22.00px;border:1px solid #cfcfcf;border-radius:2px;background:#fff"></div>
<div class="t" style="left:870.20px;top:681.50px;transform:translate(-50%,-50%);font-size:8.9px;color:#111;-webkit-text-stroke-width:0.20px">더보기</div>
<div class="a" style="left:83.50px;top:698.00px;width:808.50px;height:23.80px;background:#eef1f4;border-radius:4px"></div>
<div class="a" style="left:100.00px;top:704.00px;width:12.00px;height:12.00px;border:1px solid #aaa;border-radius:1px;background:#fff"></div>
<div class="t" style="left:121.00px;top:710.00px;transform:translateY(-50%);font-size:9.5px;color:#888">중요</div>
<div class="t" style="left:316.00px;top:710.00px;transform:translate(-50%,-50%);font-size:9.5px;color:#888">이름</div>
<div class="t" style="left:513.00px;top:710.00px;transform:translate(-50%,-50%);font-size:9.5px;color:#888">버전</div>
<div class="t" style="left:582.00px;top:710.00px;transform:translate(-50%,-50%);font-size:9.5px;color:#888">등록자</div>
<div class="t" style="left:661.00px;top:710.00px;transform:translate(-50%,-50%);font-size:9.5px;color:#888">수정일</div>
<div class="t" style="left:735.00px;top:710.00px;transform:translate(-50%,-50%);font-size:9.5px;color:#888">크기</div>
<div class="t" style="left:830.00px;top:710.00px;transform:translate(-50%,-50%);font-size:9.5px;color:#888">문서상태</div>
</div></div>
<div class="a" style="left:-20px;top:18px;width:904.8px;height:760px;background:rgba(0,0,0,.3);border-top-right-radius:9px"></div>
<div class="a" style="left:193.6px;top:121.9px;width:360.6px;height:515.7px;background:#fff;box-shadow:0.5px 1.5px 2px rgba(0,0,0,.4),0 0 2px rgba(0,0,0,.15);overflow:hidden">
<div class="t" style="left:12.40px;top:23.10px;transform:translateY(-50%);font-size:10px;font-weight:bold;color:#111">문서정보</div>
<svg style="left:339.40px;top:18.10px" width="10" height="10" viewBox="0 0 10 10"><path d="M.5 .5l9 9M9.5 .5l-9 9" stroke="#999" stroke-width="1"/></svg>
<div class="a" style="left:12.40px;top:35.10px;width:336.00px;height:1.00px;background:#e6e6e6"></div>
<div class="a" style="left:12.40px;top:48.10px;width:336.00px;height:97.00px;background:#f2f4f9;border:1px solid #dfe5ef;border-radius:3px"></div>
<div class="a" style="left:22.40px;top:58.70px;width:59.80px;height:76.30px;background:#fff;border-radius:3px;box-shadow:0 0.5px 2.5px rgba(0,0,0,.14)"></div>
<div class="a" style="left:29.40px;top:66.10px;width:17.00px;height:0.70px;background:#999"></div>
<div class="a" style="left:29.40px;top:68.70px;width:45.00px;height:0.70px;background:#e2e2e2"></div>
<div class="a" style="left:29.40px;top:70.10px;width:45.00px;height:0.70px;background:#e2e2e2"></div>
<div class="a" style="left:29.40px;top:71.50px;width:20.00px;height:0.70px;background:#e2e2e2"></div>
<div class="a" style="left:30.10px;top:75.10px;width:44.30px;height:21.80px;background:#edf2fd"></div>
<div class="a" style="left:46.70px;top:76.50px;width:11.40px;height:11.40px;border-radius:50%;background:radial-gradient(circle at 45% 40%,#a9d0fb,#6f8cf0 70%,#8a7cf0);box-shadow:0 0 0 1px #fff"></div>
<div class="a" style="left:52.40px;top:87.90px;width:0.60px;height:3.00px;background:#c5d3f0"></div>
<div class="a" style="left:37.90px;top:89.10px;width:29.00px;height:0.60px;background:#c5d3f0"></div>
<div class="a" style="left:32.40px;top:91.00px;width:11.60px;height:1.40px;background:#3a6cf0"></div>
<div class="a" style="left:33.40px;top:93.00px;width:9.60px;height:2.60px;background:#fff"></div>
<div class="a" style="left:35.40px;top:94.10px;width:5.60px;height:0.60px;background:#c9c09a"></div>
<div class="a" style="left:46.60px;top:91.00px;width:11.60px;height:1.40px;background:#3a6cf0"></div>
<div class="a" style="left:47.60px;top:93.00px;width:9.60px;height:2.60px;background:#fff"></div>
<div class="a" style="left:49.60px;top:94.10px;width:5.60px;height:0.60px;background:#c9c09a"></div>
<div class="a" style="left:60.90px;top:91.00px;width:11.60px;height:1.40px;background:#3a6cf0"></div>
<div class="a" style="left:61.90px;top:93.00px;width:9.60px;height:2.60px;background:#fff"></div>
<div class="a" style="left:63.90px;top:94.10px;width:5.60px;height:0.60px;background:#c9c09a"></div>
<div class="a" style="left:29.40px;top:102.70px;width:30.00px;height:0.70px;background:#888"></div>
<div class="a" style="left:29.40px;top:105.30px;width:28.00px;height:0.60px;background:#bbb"></div>
<div class="a" style="left:29.40px;top:106.70px;width:38.00px;height:0.60px;background:#bbb"></div>
<div class="a" style="left:30.10px;top:110.10px;width:44.30px;height:8.20px;background:#f4f4f4"></div>
<div class="a" style="left:30.10px;top:110.10px;width:12.30px;height:8.20px;background:#e9f1fd"></div>
<div class="a" style="left:30.10px;top:118.90px;width:44.30px;height:8.20px;background:#f4f4f4"></div>
<div class="a" style="left:30.10px;top:118.90px;width:12.30px;height:8.20px;background:#e9f1fd"></div>
<div class="a" style="left:34.90px;top:114.00px;width:3.00px;height:0.90px;background:#5d9af0"></div>
<div class="a" style="left:34.40px;top:122.70px;width:4.00px;height:0.90px;background:#5d9af0"></div>
<div class="a" style="left:43.90px;top:111.70px;width:29.00px;height:0.50px;background:#c4c4c4"></div>
<div class="a" style="left:43.90px;top:113.30px;width:29.00px;height:0.50px;background:#c4c4c4"></div>
<div class="a" style="left:43.90px;top:114.90px;width:29.00px;height:0.50px;background:#c4c4c4"></div>
<div class="a" style="left:43.90px;top:116.50px;width:29.00px;height:0.50px;background:#c4c4c4"></div>
<div class="a" style="left:43.90px;top:120.70px;width:29.00px;height:0.50px;background:#bbb"></div>
<div class="a" style="left:43.90px;top:122.30px;width:29.00px;height:0.50px;background:#bbb"></div>
<div class="a" style="left:43.90px;top:123.90px;width:29.00px;height:0.50px;background:#bbb"></div>
<div class="a" style="left:43.90px;top:125.50px;width:29.00px;height:0.50px;background:#bbb"></div>
<div class="a" style="left:30.10px;top:127.30px;width:44.30px;height:0.60px;background:#e6eefb"></div>
<div class="a" style="left:44.40px;top:128.70px;width:18.00px;height:0.60px;background:#ccc"></div>
<div class="t" style="left:91.90px;top:67.10px;transform:translateY(-50%);font-size:9.6px;font-weight:bold;color:#111;letter-spacing:-0.1px">ONECHAMBER for Amaranth10_화면리뉴얼.pdf</div>
<div class="t" style="left:91.90px;top:80.60px;transform:translateY(-50%);font-size:6px;color:#999">홍길동</div>
<div class="a" style="left:113.90px;top:77.60px;width:0.80px;height:6.00px;background:#ccc"></div>
<div class="t" style="left:117.90px;top:80.60px;transform:translateY(-50%);font-size:6.6px;color:#999;letter-spacing:0px">2021-09-08 13:26</div>
<div class="a" style="left:91.90px;top:114.90px;width:246.50px;height:1.00px;background:#dde2ea"></div>
<svg style="left:94.20px;top:120.70px" width="11" height="11" viewBox="0 0 11 11"><circle cx="5" cy="3.2" r="2.5" fill="none" stroke="#2db582" stroke-width="1.3"/><path d="M1 10c0-2.4 1.7-3.9 4-3.9 1.2 0 2.2.4 2.8 1M1 10h4.3M6.2 9.8h3.8M8.6 8.2l1.7 1.6-1.7 1.6" fill="none" stroke="#2db582" stroke-width="1.3" stroke-linejoin="round"/></svg>
<svg style="left:111.20px;top:120.70px" width="11.5" height="11.5" viewBox="0 0 11.5 11.5"><path d="M5.8.7c2.9 0 5.1 1.8 5.1 4.1s-2.2 4.1-5.1 4.1c-.5 0-1-.1-1.5-.2L2 10.8l.5-2.4C1.3 7.6.7 6.3.7 4.8.7 2.5 2.9.7 5.8.7z" fill="none" stroke="#2e94d6" stroke-width="1.3" stroke-linejoin="round"/><rect x="3.9" y="3.3" width="3.8" height="3" fill="#2e94d6"/></svg>
<div class="a" style="left:127.20px;top:119.70px;width:15.00px;height:15.00px;border-radius:50%;background:#f3eefc"></div>
<svg style="left:130.00px;top:121.90px" width="9.5" height="10.5" viewBox="0 0 9.5 10.5"><path d="M4.75.7l3.9 1.5v3.1c0 2.4-1.7 4.1-3.9 4.8C2.55 9.4.85 7.7.85 5.3V2.2z" fill="none" stroke="#a26ae8" stroke-width="1.5" stroke-linejoin="round"/><path d="M4.75 2.2v6.2" stroke="#a26ae8" stroke-width="1.5"/></svg>
<svg style="left:282.70px;top:123.90px" width="8" height="8.2" viewBox="0 0 8 8.2"><circle cx="6.4" cy="1.6" r="1.5" fill="#777"/><circle cx="1.6" cy="4.1" r="1.5" fill="#777"/><circle cx="6.4" cy="6.6" r="1.5" fill="#777"/><path d="M1.6 4.1L6.4 1.6M1.6 4.1L6.4 6.6" stroke="#777" stroke-width="1"/></svg>
<svg style="left:296.20px;top:124.00px" width="8.5" height="8.3" viewBox="0 0 8.5 8.3"><path d="M6.4.9a1.6 1.6 0 0 1 1.2 2.5L3.6 7.4a1.6 1.6 0 0 1-2.6-2.3L5 1.1a1.6 1.6 0 0 1 1.4-.2z" fill="none" stroke="#777" stroke-width="1.1"/><path d="M3.4 5l1.7-1.7" stroke="#777" stroke-width=".8"/></svg>
<svg style="left:309.90px;top:123.10px" width="7.5" height="8.8" viewBox="0 0 7.5 8.8"><path d="M.6.6h6.3v7.6L3.75 6.2.6 8.2z" fill="none" stroke="#777" stroke-width="1.1" stroke-linejoin="round"/><path d="M2.2 2.4h3.1M3.75 2.4v3.2M2.3 4h2.9" stroke="#777" stroke-width=".8"/></svg>
<div class="a" style="left:323.70px;top:125.10px;width:0.80px;height:6.50px;background:#dcdcdc"></div>
<svg style="left:330.70px;top:124.40px" width="7" height="7.6" viewBox="0 0 7 7.6"><path d="M1.2 5.6L5.6.9" stroke="#555" stroke-width="1.5" stroke-linecap="round"/><path d="M.8 7.1h6" stroke="#888" stroke-width="1"/></svg>
<div class="t" style="left:19.90px;top:164.10px;transform:translateY(-50%);font-size:8.3px;color:#444;-webkit-text-stroke-width:0.10px">기본정보</div>
<div class="t" style="left:70.40px;top:164.10px;transform:translateY(-50%);font-size:8.3px;font-weight:bold;color:#1c90fb">권한정보</div>
<div class="t" style="left:121.40px;top:164.10px;transform:translateY(-50%);font-size:8.3px;color:#444;-webkit-text-stroke-width:0.10px">버전정보</div>
<div class="t" style="left:172.90px;top:164.10px;transform:translateY(-50%);font-size:8.3px;color:#444;-webkit-text-stroke-width:0.10px">이력조회</div>
<div class="t" style="left:223.90px;top:164.10px;transform:translateY(-50%);font-size:8.3px;color:#444;-webkit-text-stroke-width:0.10px">연관문서</div>
<div class="t" style="left:274.80px;top:164.10px;transform:translateY(-50%);font-size:8.3px;color:#444;-webkit-text-stroke-width:0.10px">댓글</div>
<div class="a" style="left:61.40px;top:160.10px;width:0.80px;height:8.00px;background:#e1e1e1"></div>
<div class="a" style="left:112.40px;top:160.10px;width:0.80px;height:8.00px;background:#e1e1e1"></div>
<div class="a" style="left:164.10px;top:160.10px;width:0.80px;height:8.00px;background:#e1e1e1"></div>
<div class="a" style="left:215.30px;top:160.10px;width:0.80px;height:8.00px;background:#e1e1e1"></div>
<div class="a" style="left:266.20px;top:160.10px;width:0.80px;height:8.00px;background:#e1e1e1"></div>
<div class="a" style="left:12.40px;top:173.60px;width:336.00px;height:1.50px;background:#e6e6e6"></div>
<div class="a" style="left:61.40px;top:172.90px;width:51.00px;height:2.20px;background:#1c90fb"></div>
<div class="a" style="left:310.40px;top:181.10px;width:38.00px;height:16.00px;border:1px solid #d3d3d3;border-radius:2px;background:#fff"></div>
<div class="t" style="left:329.40px;top:189.10px;transform:translate(-50%,-50%);font-size:7px;color:#111;-webkit-text-stroke-width:0.12px">권한변경</div>
<div class="a" style="left:12.40px;top:200.60px;width:336.00px;height:1.60px;background:#555"></div>
<div class="a" style="left:12.40px;top:202.10px;width:336.00px;height:19.80px;background:#f8f8f8"></div>
<div class="t" style="left:84.40px;top:211.60px;transform:translate(-50%,-50%);font-size:7px;font-weight:bold;color:#222">부서/사용자(ID)</div>
<div class="t" style="left:204.40px;top:211.60px;transform:translate(-50%,-50%);font-size:7px;font-weight:bold;color:#222">직급</div>
<div class="t" style="left:300.40px;top:211.60px;transform:translate(-50%,-50%);font-size:7px;font-weight:bold;color:#222">권한</div>
<div class="a" style="left:12.40px;top:241.26px;width:336.00px;height:0.80px;background:#ececec"></div>
<div class="t" style="left:84.40px;top:231.83px;transform:translate(-50%,-50%);font-size:7px;color:#1a1a1a;letter-spacing:-0.1px">홍길동(honghonghong)</div>
<div class="t" style="left:204.40px;top:231.83px;transform:translate(-50%,-50%);font-size:7px;color:#1a1a1a">-</div>
<div class="a" style="left:281.90px;top:227.03px;width:9.60px;height:9.60px;border-radius:50%;background:#4aa9f5"></div>
<svg style="left:283.90px;top:228.53px" width="6" height="7" viewBox="0 0 6 7"><circle cx="3" cy="2" r="1.5" fill="#fff"/><path d="M.3 6.3a2.7 2.2 0 0 1 5.4 0z" fill="#fff"/></svg>
<div class="t" style="left:294.10px;top:231.83px;transform:translateY(-50%);font-size:6.6px;color:#3a9ef0">관리권한</div>
<div class="a" style="left:12.40px;top:261.12px;width:336.00px;height:0.80px;background:#ececec"></div>
<div class="t" style="left:84.40px;top:251.69px;transform:translate(-50%,-50%);font-size:7px;color:#1a1a1a;letter-spacing:-0.1px">홍길동(honghonghong)</div>
<div class="t" style="left:204.40px;top:251.69px;transform:translate(-50%,-50%);font-size:7px;color:#1a1a1a">사원이상</div>
<div class="a" style="left:281.90px;top:246.89px;width:9.60px;height:9.60px;border-radius:50%;background:#4aa9f5"></div>
<svg style="left:283.90px;top:248.39px" width="6" height="7" viewBox="0 0 6 7"><circle cx="3" cy="2" r="1.5" fill="#fff"/><path d="M.3 6.3a2.7 2.2 0 0 1 5.4 0z" fill="#fff"/></svg>
<div class="t" style="left:294.10px;top:251.69px;transform:translateY(-50%);font-size:6.6px;color:#3a9ef0">관리권한</div>
<div class="a" style="left:12.40px;top:280.98px;width:336.00px;height:0.80px;background:#ececec"></div>
<div class="t" style="left:84.40px;top:271.55px;transform:translate(-50%,-50%);font-size:7px;color:#1a1a1a;letter-spacing:-0.1px">홍길동(honghonghong)</div>
<div class="t" style="left:204.40px;top:271.55px;transform:translate(-50%,-50%);font-size:7px;color:#1a1a1a">사원이상</div>
<div class="a" style="left:281.90px;top:266.75px;width:9.60px;height:9.60px;border-radius:50%;background:#4aa9f5"></div>
<svg style="left:283.90px;top:268.25px" width="6" height="7" viewBox="0 0 6 7"><circle cx="3" cy="2" r="1.5" fill="#fff"/><path d="M.3 6.3a2.7 2.2 0 0 1 5.4 0z" fill="#fff"/></svg>
<div class="t" style="left:294.10px;top:271.55px;transform:translateY(-50%);font-size:6.6px;color:#3a9ef0">관리권한</div>
<div class="a" style="left:12.40px;top:300.84px;width:336.00px;height:0.80px;background:#ececec"></div>
<div class="t" style="left:84.40px;top:291.41px;transform:translate(-50%,-50%);font-size:7px;color:#1a1a1a;letter-spacing:-0.1px">홍길동(honghonghong)</div>
<div class="t" style="left:204.40px;top:291.41px;transform:translate(-50%,-50%);font-size:7px;color:#1a1a1a">사원이상</div>
<div class="a" style="left:281.90px;top:286.61px;width:9.60px;height:9.60px;border-radius:50%;background:#4aa9f5"></div>
<svg style="left:283.90px;top:288.11px" width="6" height="7" viewBox="0 0 6 7"><circle cx="3" cy="2" r="1.5" fill="#fff"/><path d="M.3 6.3a2.7 2.2 0 0 1 5.4 0z" fill="#fff"/></svg>
<div class="t" style="left:294.10px;top:291.41px;transform:translateY(-50%);font-size:6.6px;color:#3a9ef0">관리권한</div>
<div class="a" style="left:12.40px;top:320.70px;width:336.00px;height:0.80px;background:#ececec"></div>
<div class="t" style="left:84.40px;top:311.27px;transform:translate(-50%,-50%);font-size:7px;color:#1a1a1a;letter-spacing:-0.1px">DOC 개발본부 협력업체</div>
<div class="t" style="left:204.40px;top:311.27px;transform:translate(-50%,-50%);font-size:7px;color:#1a1a1a">사원이상</div>
<div class="a" style="left:281.90px;top:306.47px;width:9.60px;height:9.60px;border-radius:50%;background:#a9b1f7"></div>
<svg style="left:283.40px;top:308.77px" width="7" height="5" viewBox="0 0 7 5"><path d="M.3 2.5C1.3 1 2.3.3 3.5.3S5.7 1 6.7 2.5C5.7 4 4.7 4.7 3.5 4.7S1.3 4 .3 2.5z" fill="#fff"/><circle cx="3.5" cy="2.5" r="1.1" fill="#a9b1f7"/></svg>
<div class="t" style="left:294.10px;top:311.27px;transform:translateY(-50%);font-size:6.6px;color:#6a78f0">읽기권한</div>
<div class="a" style="left:12.40px;top:340.56px;width:336.00px;height:0.80px;background:#ececec"></div>
<div class="t" style="left:84.40px;top:331.13px;transform:translate(-50%,-50%);font-size:7px;color:#1a1a1a;letter-spacing:-0.1px">DOC 개발본부 협력업체</div>
<div class="t" style="left:204.40px;top:331.13px;transform:translate(-50%,-50%);font-size:7px;color:#1a1a1a">사원이상</div>
<div class="a" style="left:281.90px;top:326.33px;width:9.60px;height:9.60px;border-radius:50%;background:#a9b1f7"></div>
<svg style="left:283.40px;top:328.63px" width="7" height="5" viewBox="0 0 7 5"><path d="M.3 2.5C1.3 1 2.3.3 3.5.3S5.7 1 6.7 2.5C5.7 4 4.7 4.7 3.5 4.7S1.3 4 .3 2.5z" fill="#fff"/><circle cx="3.5" cy="2.5" r="1.1" fill="#a9b1f7"/></svg>
<div class="t" style="left:294.10px;top:331.13px;transform:translateY(-50%);font-size:6.6px;color:#6a78f0">읽기권한</div>
<div class="a" style="left:12.40px;top:360.42px;width:336.00px;height:0.80px;background:#ececec"></div>
<div class="t" style="left:84.40px;top:350.99px;transform:translate(-50%,-50%);font-size:7px;color:#1a1a1a;letter-spacing:-0.1px">DOC 개발본부 협력업체</div>
<div class="t" style="left:204.40px;top:350.99px;transform:translate(-50%,-50%);font-size:7px;color:#1a1a1a">사원이상</div>
<div class="a" style="left:281.90px;top:346.19px;width:9.60px;height:9.60px;border-radius:50%;background:#a9b1f7"></div>
<svg style="left:283.40px;top:348.49px" width="7" height="5" viewBox="0 0 7 5"><path d="M.3 2.5C1.3 1 2.3.3 3.5.3S5.7 1 6.7 2.5C5.7 4 4.7 4.7 3.5 4.7S1.3 4 .3 2.5z" fill="#fff"/><circle cx="3.5" cy="2.5" r="1.1" fill="#a9b1f7"/></svg>
<div class="t" style="left:294.10px;top:350.99px;transform:translateY(-50%);font-size:6.6px;color:#6a78f0">읽기권한</div>
<div class="a" style="left:12.40px;top:380.28px;width:336.00px;height:0.80px;background:#ececec"></div>
<div class="t" style="left:84.40px;top:370.85px;transform:translate(-50%,-50%);font-size:7px;color:#1a1a1a;letter-spacing:-0.1px">DOC 개발본부 협력업체</div>
<div class="t" style="left:204.40px;top:370.85px;transform:translate(-50%,-50%);font-size:7px;color:#1a1a1a">-</div>
<div class="a" style="left:281.90px;top:366.05px;width:9.60px;height:9.60px;border-radius:50%;background:#a9b1f7"></div>
<svg style="left:283.40px;top:368.35px" width="7" height="5" viewBox="0 0 7 5"><path d="M.3 2.5C1.3 1 2.3.3 3.5.3S5.7 1 6.7 2.5C5.7 4 4.7 4.7 3.5 4.7S1.3 4 .3 2.5z" fill="#fff"/><circle cx="3.5" cy="2.5" r="1.1" fill="#a9b1f7"/></svg>
<div class="t" style="left:294.10px;top:370.85px;transform:translateY(-50%);font-size:6.6px;color:#6a78f0">읽기권한</div>
<div class="a" style="left:12.40px;top:400.14px;width:336.00px;height:0.80px;background:#ececec"></div>
<div class="t" style="left:84.40px;top:390.71px;transform:translate(-50%,-50%);font-size:7px;color:#1a1a1a;letter-spacing:-0.1px">DOC 개발본부 협력업체</div>
<div class="t" style="left:204.40px;top:390.71px;transform:translate(-50%,-50%);font-size:7px;color:#1a1a1a">-</div>
<div class="a" style="left:281.90px;top:385.91px;width:9.60px;height:9.60px;border-radius:50%;background:#a9b1f7"></div>
<svg style="left:283.40px;top:388.21px" width="7" height="5" viewBox="0 0 7 5"><path d="M.3 2.5C1.3 1 2.3.3 3.5.3S5.7 1 6.7 2.5C5.7 4 4.7 4.7 3.5 4.7S1.3 4 .3 2.5z" fill="#fff"/><circle cx="3.5" cy="2.5" r="1.1" fill="#a9b1f7"/></svg>
<div class="t" style="left:294.10px;top:390.71px;transform:translateY(-50%);font-size:6.6px;color:#6a78f0">읽기권한</div>
<div class="a" style="left:12.40px;top:420.00px;width:336.00px;height:0.80px;background:#ececec"></div>
<div class="t" style="left:84.40px;top:410.57px;transform:translate(-50%,-50%);font-size:7px;color:#1a1a1a;letter-spacing:-0.1px">DOC 개발본부 협력업체</div>
<div class="t" style="left:204.40px;top:410.57px;transform:translate(-50%,-50%);font-size:7px;color:#1a1a1a">사원이상</div>
<div class="a" style="left:281.90px;top:405.77px;width:9.60px;height:9.60px;border-radius:50%;background:#a9b1f7"></div>
<svg style="left:283.40px;top:408.07px" width="7" height="5" viewBox="0 0 7 5"><path d="M.3 2.5C1.3 1 2.3.3 3.5.3S5.7 1 6.7 2.5C5.7 4 4.7 4.7 3.5 4.7S1.3 4 .3 2.5z" fill="#fff"/><circle cx="3.5" cy="2.5" r="1.1" fill="#a9b1f7"/></svg>
<div class="t" style="left:294.10px;top:410.57px;transform:translateY(-50%);font-size:6.6px;color:#6a78f0">읽기권한</div>
<div class="a" style="left:12.40px;top:439.86px;width:336.00px;height:0.80px;background:#ececec"></div>
<div class="t" style="left:84.40px;top:430.43px;transform:translate(-50%,-50%);font-size:7px;color:#1a1a1a;letter-spacing:-0.1px">정보보안정책 컨설팅본부</div>
<div class="t" style="left:204.40px;top:430.43px;transform:translate(-50%,-50%);font-size:7px;color:#1a1a1a">사원이상</div>
<div class="a" style="left:281.90px;top:425.63px;width:9.60px;height:9.60px;border-radius:50%;background:#a9b1f7"></div>
<svg style="left:283.40px;top:427.93px" width="7" height="5" viewBox="0 0 7 5"><path d="M.3 2.5C1.3 1 2.3.3 3.5.3S5.7 1 6.7 2.5C5.7 4 4.7 4.7 3.5 4.7S1.3 4 .3 2.5z" fill="#fff"/><circle cx="3.5" cy="2.5" r="1.1" fill="#a9b1f7"/></svg>
<div class="t" style="left:294.10px;top:430.43px;transform:translateY(-50%);font-size:6.6px;color:#6a78f0">읽기권한</div>
<div class="a" style="left:12.40px;top:459.72px;width:336.00px;height:0.80px;background:#ececec"></div>
<div class="t" style="left:84.40px;top:450.29px;transform:translate(-50%,-50%);font-size:7px;color:#1a1a1a;letter-spacing:-0.1px">정보보안정책 컨설팅본부</div>
<div class="t" style="left:204.40px;top:450.29px;transform:translate(-50%,-50%);font-size:7px;color:#1a1a1a">사원이상</div>
<div class="a" style="left:281.90px;top:445.49px;width:9.60px;height:9.60px;border-radius:50%;background:#a9b1f7"></div>
<svg style="left:283.40px;top:447.79px" width="7" height="5" viewBox="0 0 7 5"><path d="M.3 2.5C1.3 1 2.3.3 3.5.3S5.7 1 6.7 2.5C5.7 4 4.7 4.7 3.5 4.7S1.3 4 .3 2.5z" fill="#fff"/><circle cx="3.5" cy="2.5" r="1.1" fill="#a9b1f7"/></svg>
<div class="t" style="left:294.10px;top:450.29px;transform:translateY(-50%);font-size:6.6px;color:#6a78f0">읽기권한</div>
<div class="a" style="left:12.40px;top:479.58px;width:336.00px;height:0.80px;background:#ececec"></div>
<div class="t" style="left:84.40px;top:470.15px;transform:translate(-50%,-50%);font-size:7px;color:#1a1a1a;letter-spacing:-0.1px">헬스케어 솔루션 사업본부</div>
<div class="t" style="left:204.40px;top:470.15px;transform:translate(-50%,-50%);font-size:7px;color:#1a1a1a">-</div>
<div class="a" style="left:281.90px;top:465.35px;width:9.60px;height:9.60px;border-radius:50%;background:#a9b1f7"></div>
<svg style="left:283.40px;top:467.65px" width="7" height="5" viewBox="0 0 7 5"><path d="M.3 2.5C1.3 1 2.3.3 3.5.3S5.7 1 6.7 2.5C5.7 4 4.7 4.7 3.5 4.7S1.3 4 .3 2.5z" fill="#fff"/><circle cx="3.5" cy="2.5" r="1.1" fill="#a9b1f7"/></svg>
<div class="t" style="left:294.10px;top:470.15px;transform:translateY(-50%);font-size:6.6px;color:#6a78f0">읽기권한</div>
<div class="a" style="left:12.40px;top:499.44px;width:336.00px;height:0.80px;background:#ececec"></div>
<div class="t" style="left:84.40px;top:490.01px;transform:translate(-50%,-50%);font-size:7px;color:#1a1a1a;letter-spacing:-0.1px">헬스케어 솔루션 사업본부</div>
<div class="t" style="left:204.40px;top:490.01px;transform:translate(-50%,-50%);font-size:7px;color:#1a1a1a">-</div>
<div class="a" style="left:281.90px;top:485.21px;width:9.60px;height:9.60px;border-radius:50%;background:#a9b1f7"></div>
<svg style="left:283.40px;top:487.51px" width="7" height="5" viewBox="0 0 7 5"><path d="M.3 2.5C1.3 1 2.3.3 3.5.3S5.7 1 6.7 2.5C5.7 4 4.7 4.7 3.5 4.7S1.3 4 .3 2.5z" fill="#fff"/><circle cx="3.5" cy="2.5" r="1.1" fill="#a9b1f7"/></svg>
<div class="t" style="left:294.10px;top:490.01px;transform:translateY(-50%);font-size:6.6px;color:#6a78f0">읽기권한</div>
<div class="a" style="left:12.40px;top:519.30px;width:336.00px;height:0.80px;background:#ececec"></div>
<div class="t" style="left:84.40px;top:509.87px;transform:translate(-50%,-50%);font-size:7px;color:#1a1a1a;letter-spacing:-0.1px">헬스케어 솔루션 사업본부</div>
<div class="t" style="left:204.40px;top:509.87px;transform:translate(-50%,-50%);font-size:7px;color:#1a1a1a">-</div>
<div class="a" style="left:281.90px;top:505.07px;width:9.60px;height:9.60px;border-radius:50%;background:#a9b1f7"></div>
<svg style="left:283.40px;top:507.37px" width="7" height="5" viewBox="0 0 7 5"><path d="M.3 2.5C1.3 1 2.3.3 3.5.3S5.7 1 6.7 2.5C5.7 4 4.7 4.7 3.5 4.7S1.3 4 .3 2.5z" fill="#fff"/><circle cx="3.5" cy="2.5" r="1.1" fill="#a9b1f7"/></svg>
<div class="t" style="left:294.10px;top:509.87px;transform:translateY(-50%);font-size:6.6px;color:#6a78f0">읽기권한</div>
<div class="a" style="left:156.70px;top:202.10px;width:0.80px;height:320.00px;background:#ececec"></div>
<div class="a" style="left:252.80px;top:202.10px;width:0.80px;height:320.00px;background:#ececec"></div>
<div class="a" style="left:12.40px;top:202.10px;width:0.80px;height:320.00px;background:#ececec"></div>
<div class="a" style="left:347.60px;top:202.10px;width:0.80px;height:320.00px;background:#ececec"></div>
</div>
</body></html>
